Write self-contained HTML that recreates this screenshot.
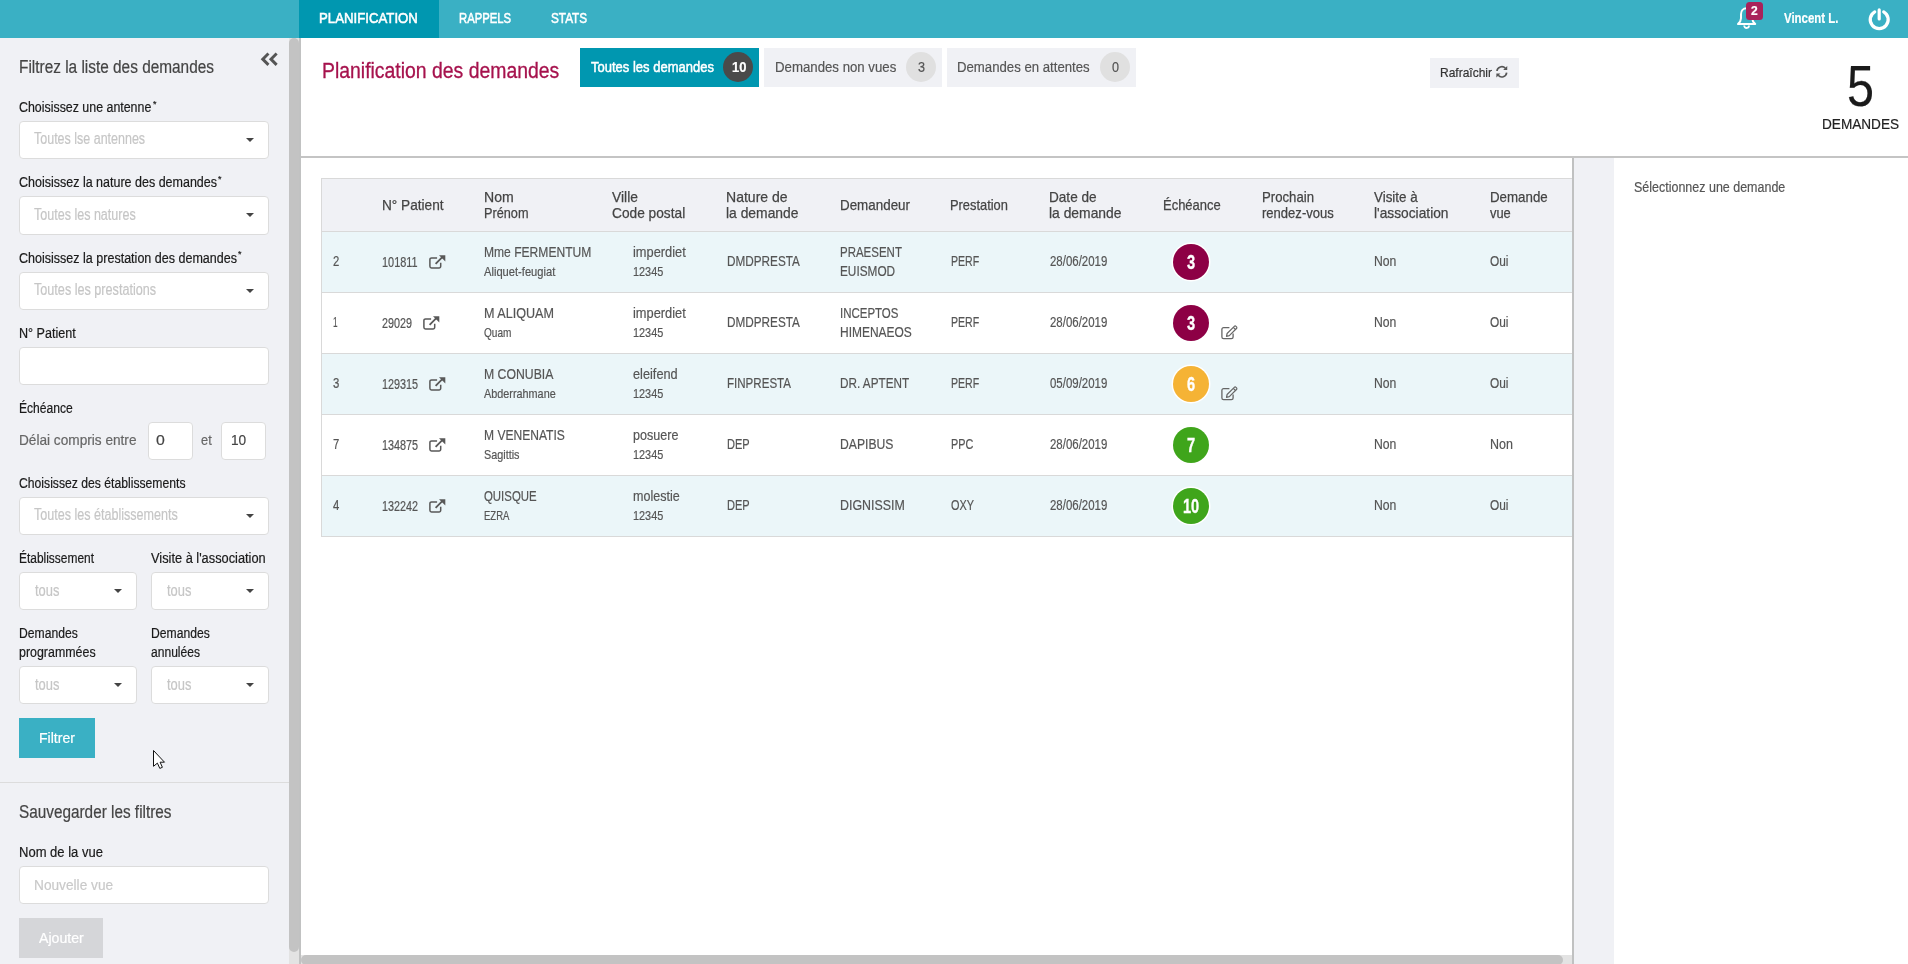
<!DOCTYPE html>
<html lang="fr"><head><meta charset="utf-8"><title>Planification des demandes</title>
<style>
html,body{margin:0;padding:0}
h1,h2,form,label,th,td{margin:0;font:inherit;text-align:left}
body{width:1908px;height:964px;overflow:hidden;position:relative;background:#fff;font-family:"Liberation Sans",sans-serif}
/* every visual element is placed in page coordinates relative to #root */
#root{position:absolute;left:0;top:0;width:1908px;height:964px;will-change:transform}
.abs,.t,.inp,.ic,.btn,.badge,.circ,.bg{position:absolute}
.t{display:inline-block;white-space:nowrap;line-height:1;transform-origin:0 50%;-webkit-text-stroke:.2px}
header .bg{left:0;top:0;width:1908px;height:38px;background:#3ab0c4}
header .active{left:299px;top:0;width:140px;height:38px;background:#0097b0}
aside .bg{left:0;top:38px;width:289px;height:926px;background:#f0f1f5}
main .bg{left:301px;top:38px;width:1607px;height:926px;background:#fff;z-index:-1}
.inp{box-sizing:border-box;background:#fff;border:1px solid #dcdcdc;border-radius:4px}
.caret{position:absolute;top:15.600px;width:0;height:0;border-left:4px solid transparent;border-right:4px solid transparent;border-top:4.500px solid #444}
.btn{box-sizing:border-box}
.nv{-webkit-text-stroke:.55px #fff}
thead .t{-webkit-text-stroke:.25px}
.tb{-webkit-text-stroke:.5px #fff}
.ttl{-webkit-text-stroke:.3px #a6124d}
.badge{border-radius:50%;width:30px;height:30px;top:52px}
.circ{border-radius:50%;width:36.200px;height:36.200px;box-shadow:0 0 0 1.500px #fff}
.num{font-size:20px;font-weight:700;color:#fff;-webkit-text-stroke:.35px #fff;transform:scaleX(.73)}
table.grid{margin:178px 0 0 321px;width:1252px;border-collapse:collapse;table-layout:fixed;border:1px solid #d9d9d9}
table.grid td,table.grid th{border-top:1px solid #d9d9d9;border-bottom:1px solid #d9d9d9;padding:0}
table.grid th{height:52px;background:#f0f1f5}
table.grid td{height:60px}
table.grid tr.odd td{background:#ebf6f9}
</style></head><body><div id="root">

<header><div class="bg"></div><div class="bg active"></div><nav>
<span class="t nv" style="left:319.3px;top:10.0px;font-size:15.5px;color:#fff;transform:scaleX(0.8527)">PLANIFICATION</span>
<span class="t nv" style="left:458.5px;top:10.0px;font-size:15.5px;color:#fff;transform:scaleX(0.7271)">RAPPELS</span>
<span class="t nv" style="left:550.7px;top:10.0px;font-size:15.5px;color:#fff;transform:scaleX(0.7575)">STATS</span>
</nav><div class="user">
<svg class="ic" style="left:1734px;top:4px" width="26" height="28" viewBox="1734 4 26 28"><path d="M1746.600 8.200c-3.400 0-5.600 2.600-5.600 6v4c0 2.400-1.300 4.200-3 5.800h17.200c-1.700-1.600-3-3.400-3-5.800v-4c0-3.400-2.200-6-5.600-6z" fill="none" stroke="#fff" stroke-width="2" stroke-linejoin="round"/><path d="M1744.200 25.600a2.400 2.400 0 0 0 4.800 0" fill="none" stroke="#fff" stroke-width="1.800"/></svg>
<div class="abs" style="left:1746px;top:2px;width:17px;height:18px;border-radius:3.500px;background:#a9225a"></div>
<span class="t" style="left:1751px;top:5px;font-size:12px;font-weight:700;color:#fff">2</span>
<span class="t" style="left:1784.3px;top:10.0px;font-size:15.5px;color:#fff;transform:scaleX(0.7385);font-weight:700">Vincent L.</span>
<svg class="ic" style="left:1867px;top:7px" width="24" height="24" viewBox="0 0 24 24"><path d="M7.700 4.810a9 9 0 1 0 9 0" fill="none" stroke="#fff" stroke-width="3.200" stroke-linecap="round"/><path d="M12.200 2.900v9" stroke="#fff" stroke-width="3.200" stroke-linecap="round"/></svg>
</div></header>
<aside><div class="bg"></div>
<div class="abs" style="left:289px;top:38px;width:10px;height:926px;background:#e3e3e3"></div>
<div class="abs" style="left:289px;top:38px;width:10px;height:914px;background:#c3c3c3;border-radius:5px"></div>
<div class="abs" style="left:299px;top:38px;width:2px;height:926px;background:#c1c2c2"></div>
<svg class="ic" style="left:258px;top:50px" width="22" height="18" viewBox="258 50 22 18"><path d="M268.450 53.450 262.750 59.150l5.700 5.700M276.650 53.450l-5.700 5.700 5.700 5.700" fill="none" stroke="#555" stroke-width="2.900"/></svg>
<form id="filters"><h2><span class="t" style="left:19.3px;top:59.0px;font-size:17.5px;color:#444;transform:scaleX(0.8792)">Filtrez la liste des demandes</span></h2>
<div class="fg"><label><span class="t" style="left:19.0px;top:100.0px;font-size:14px;color:#1a1a1a;transform:scaleX(0.8853)">Choisissez une antenne</span><span class="t" style="left:152.6px;top:100.0px;font-size:9px;color:#1a1a1a;transform:scaleX(0.9956)">*</span></label><div class="inp select" style="left:19px;top:121px;width:250px;height:38px"><i class="caret" style="left:226.2px"></i></div><span class="t" style="left:34.3px;top:131.0px;font-size:16px;color:#c6c6c6;transform:scaleX(0.7806)">Toutes lse antennes</span></div>
<div class="fg"><label><span class="t" style="left:19.0px;top:175.0px;font-size:14px;color:#1a1a1a;transform:scaleX(0.8927)">Choisissez la nature des demandes</span><span class="t" style="left:218.3px;top:175.0px;font-size:9px;color:#1a1a1a;transform:scaleX(0.9956)">*</span></label><div class="inp select" style="left:19px;top:196px;width:250px;height:38.6px"><i class="caret" style="left:226.2px"></i></div><span class="t" style="left:34.3px;top:207.0px;font-size:16px;color:#c6c6c6;transform:scaleX(0.7832)">Toutes les natures</span></div>
<div class="fg"><label><span class="t" style="left:19.0px;top:251.0px;font-size:14px;color:#1a1a1a;transform:scaleX(0.8950)">Choisissez la prestation des demandes</span><span class="t" style="left:238.3px;top:250.0px;font-size:9px;color:#1a1a1a;transform:scaleX(0.9956)">*</span></label><div class="inp select" style="left:19px;top:272px;width:250px;height:38px"><i class="caret" style="left:226.2px"></i></div><span class="t" style="left:34.3px;top:282.0px;font-size:16px;color:#c6c6c6;transform:scaleX(0.7890)">Toutes les prestations</span></div>
<div class="fg"><label><span class="t" style="left:19.0px;top:326.0px;font-size:14px;color:#1a1a1a;transform:scaleX(0.8989)">N° Patient</span></label><div class="inp" style="left:19px;top:347px;width:250px;height:37.6px"></div></div>
<div class="fg"><label><span class="t" style="left:19.0px;top:401.0px;font-size:14px;color:#1a1a1a;transform:scaleX(0.8638)">Échéance</span></label><span class="t" style="left:19.3px;top:432.0px;font-size:15px;color:#666;transform:scaleX(0.9093)">Délai compris entre</span><div class="inp" style="left:148px;top:422px;width:45px;height:37.5px"></div><span class="t" style="left:156.0px;top:432.0px;font-size:15px;color:#444;transform:scaleX(1.0547)">0</span><span class="t" style="left:200.5px;top:432.0px;font-size:15px;color:#666;transform:scaleX(0.8549)">et</span><div class="inp" style="left:221px;top:422px;width:45px;height:37.5px"></div><span class="t" style="left:230.8px;top:432.0px;font-size:15px;color:#444;transform:scaleX(0.9109)">10</span></div>
<div class="fg"><label><span class="t" style="left:19.0px;top:476.0px;font-size:14px;color:#1a1a1a;transform:scaleX(0.8698)">Choisissez des établissements</span></label><div class="inp select" style="left:19px;top:497px;width:250px;height:37.6px"><i class="caret" style="left:226.2px"></i></div><span class="t" style="left:34.3px;top:507.0px;font-size:16px;color:#c6c6c6;transform:scaleX(0.7849)">Toutes les établissements</span></div>
<div class="fg"><label><span class="t" style="left:19.3px;top:551.0px;font-size:14px;color:#1a1a1a;transform:scaleX(0.8529)">Établissement</span></label><div class="inp select" style="left:19px;top:572px;width:118px;height:37.6px"><i class="caret" style="left:94.2px"></i></div><span class="t" style="left:34.9px;top:583.0px;font-size:16px;color:#c6c6c6;transform:scaleX(0.8066)">tous</span></div>
<div class="fg"><label><span class="t" style="left:151.0px;top:551.0px;font-size:14px;color:#1a1a1a;transform:scaleX(0.9149)">Visite à l&#x27;association</span></label><div class="inp select" style="left:151px;top:572px;width:118px;height:37.6px"><i class="caret" style="left:94.2px"></i></div><span class="t" style="left:167.0px;top:583.0px;font-size:16px;color:#c6c6c6;transform:scaleX(0.8066)">tous</span></div>
<div class="fg"><label><span class="t" style="left:19.3px;top:626.0px;font-size:14px;color:#1a1a1a;transform:scaleX(0.8685)">Demandes</span><span class="t" style="left:19.3px;top:645.0px;font-size:14px;color:#1a1a1a;transform:scaleX(0.8868)">programmées</span></label><div class="inp select" style="left:19px;top:666px;width:118px;height:37.6px"><i class="caret" style="left:94.2px"></i></div><span class="t" style="left:34.9px;top:677.0px;font-size:16px;color:#c6c6c6;transform:scaleX(0.8066)">tous</span></div>
<div class="fg"><label><span class="t" style="left:151.0px;top:626.0px;font-size:14px;color:#1a1a1a;transform:scaleX(0.8685)">Demandes</span><span class="t" style="left:151.0px;top:645.0px;font-size:14px;color:#1a1a1a;transform:scaleX(0.8622)">annulées</span></label><div class="inp select" style="left:151px;top:666px;width:118px;height:37.6px"><i class="caret" style="left:94.2px"></i></div><span class="t" style="left:167.0px;top:677.0px;font-size:16px;color:#c6c6c6;transform:scaleX(0.8066)">tous</span></div>
<div class="btn" style="left:19px;top:718px;width:76px;height:40px;background:#3ab0c4"></div><span class="t" style="left:39.0px;top:731.0px;font-size:14px;color:#fff;transform:scaleX(1.0061)">Filtrer</span>
<div class="abs" style="left:0;top:782px;width:289px;height:1px;background:#dcdcdc"></div>
<h2><span class="t" style="left:19.3px;top:804.0px;font-size:17.5px;color:#444;transform:scaleX(0.8758)">Sauvegarder les filtres</span></h2>
<div class="fg"><label><span class="t" style="left:19.3px;top:845.0px;font-size:14px;color:#1a1a1a;transform:scaleX(0.9293)">Nom de la vue</span></label><div class="inp" style="left:19px;top:866.4px;width:250px;height:37.5px"></div><span class="t" style="left:34.3px;top:877.0px;font-size:15px;color:#c9c9c9;transform:scaleX(0.9121)">Nouvelle vue</span></div>
<div class="btn" style="left:19px;top:918px;width:84px;height:40px;background:#d5d6d9"></div><span class="t" style="left:38.8px;top:931.0px;font-size:14px;color:#fff;transform:scaleX(1.0099)">Ajouter</span>
</form>
<svg class="ic" style="left:150px;top:747px" width="18" height="24" viewBox="150 747 18 24"><path d="M153.500 750.500v15.800l3.900-3.200 2.400 5.300 2.600-1.100-2.300-5.100h4.400z" fill="#fff" stroke="#111" stroke-width="1" stroke-linejoin="round"/></svg>
</aside>
<main><div class="bg"></div>
<section id="top"><h1><span class="t ttl" style="left:321.8px;top:61.0px;font-size:21.3px;color:#a6124d;transform:scaleX(0.9110)">Planification des demandes</span></h1>
<div class="tabs">
<div class="btn" style="left:580px;top:48px;width:179px;height:39px;background:#0097b0"></div><span class="t tb" style="left:590.5px;top:59.0px;font-size:15.5px;color:#fff;transform:scaleX(0.8390)">Toutes les demandes</span><div class="badge" style="left:723px;background:#4a4a4a"></div><span class="t" style="left:731.600px;top:60px;font-size:14px;font-weight:700;color:#fff;transform:scaleX(.93)">10</span>
<div class="btn" style="left:764px;top:48px;width:178px;height:39px;background:#f0f1f5"></div><span class="t" style="left:774.8px;top:59.0px;font-size:15.5px;color:#555;transform:scaleX(0.8532)">Demandes non vues</span><div class="badge" style="left:906px;background:#e0e0e0"></div><span class="t" style="left:917.800px;top:60px;font-size:14px;color:#555;transform:scaleX(.9)">3</span>
<div class="btn" style="left:947px;top:48px;width:189px;height:39px;background:#f0f1f5"></div><span class="t" style="left:957.3px;top:59.0px;font-size:15.5px;color:#555;transform:scaleX(0.8508)">Demandes en attentes</span><div class="badge" style="left:1100px;background:#e0e0e0"></div><span class="t" style="left:1111.500px;top:60px;font-size:14px;color:#555;transform:scaleX(.9)">0</span>
</div>
<div class="btn" style="left:1430px;top:58px;width:89px;height:30px;background:#f0f1f5"></div><span class="t" style="left:1439.9px;top:66.0px;font-size:13px;color:#333;transform:scaleX(0.9227)">Rafraîchir</span>
<svg class="ic" style="left:1495.300px;top:65.400px" width="13.600" height="13.600" viewBox="0 0 14 14"><path d="M2 6.200a5 5 0 0 1 8.700-2.800M12 7.800a5 5 0 0 1-8.700 2.800" fill="none" stroke="#555" stroke-width="1.700"/><path d="M12.600 1v4.200H8.400zM1.400 13V8.800h4.200z" fill="#555"/></svg>
<div class="count"><span class="t" style="left:1846.8px;top:58.0px;font-size:57px;color:#1a1a1a;transform:scaleX(0.8517)">5</span><span class="t" style="left:1821.9px;top:116.0px;font-size:15.5px;color:#222;transform:scaleX(0.8775)">DEMANDES</span></div>
<div class="abs" style="left:301px;top:156px;width:1607px;height:2px;background:#c4c4c4"></div>
</section>
<table class="grid"><colgroup><col style="width:49px"><col style="width:102px"><col style="width:128px"><col style="width:115px"><col style="width:113px"><col style="width:110px"><col style="width:100px"><col style="width:112px"><col style="width:99px"><col style="width:113px"><col style="width:115px"><col style="width:96px"></colgroup>
<thead><tr><th></th><th><span class="t" style="left:381.7px;top:197.0px;font-size:15px;color:#444;transform:scaleX(0.9099)">N° Patient</span></th><th><span class="t" style="left:483.6px;top:189.0px;font-size:15px;color:#444;transform:scaleX(0.9377)">Nom</span><span class="t" style="left:483.6px;top:205.0px;font-size:15px;color:#444;transform:scaleX(0.8471)">Prénom</span></th><th><span class="t" style="left:612.4px;top:189.0px;font-size:15px;color:#444;transform:scaleX(0.9224)">Ville</span><span class="t" style="left:612.4px;top:205.0px;font-size:15px;color:#444;transform:scaleX(0.9143)">Code postal</span></th><th><span class="t" style="left:726.4px;top:189.0px;font-size:15px;color:#444;transform:scaleX(0.9351)">Nature de</span><span class="t" style="left:726.4px;top:205.0px;font-size:15px;color:#444;transform:scaleX(0.9247)">la demande</span></th><th><span class="t" style="left:839.6px;top:197.0px;font-size:15px;color:#444;transform:scaleX(0.8930)">Demandeur</span></th><th><span class="t" style="left:950.3px;top:197.0px;font-size:15px;color:#444;transform:scaleX(0.8572)">Prestation</span></th><th><span class="t" style="left:1049.4px;top:189.0px;font-size:15px;color:#444;transform:scaleX(0.9059)">Date de</span><span class="t" style="left:1049.4px;top:205.0px;font-size:15px;color:#444;transform:scaleX(0.9247)">la demande</span></th><th><span class="t" style="left:1162.5px;top:197.0px;font-size:15px;color:#444;transform:scaleX(0.8648)">Échéance</span></th><th><span class="t" style="left:1261.5px;top:189.0px;font-size:15px;color:#444;transform:scaleX(0.8783)">Prochain</span><span class="t" style="left:1261.5px;top:205.0px;font-size:15px;color:#444;transform:scaleX(0.8698)">rendez-vous</span></th><th><span class="t" style="left:1373.6px;top:189.0px;font-size:15px;color:#444;transform:scaleX(0.8912)">Visite à</span><span class="t" style="left:1373.6px;top:205.0px;font-size:15px;color:#444;transform:scaleX(0.9169)">l&#x27;association</span></th><th><span class="t" style="left:1489.7px;top:189.0px;font-size:15px;color:#444;transform:scaleX(0.8871)">Demande</span><span class="t" style="left:1489.7px;top:205.0px;font-size:15px;color:#444;transform:scaleX(0.8599)">vue</span></th></tr></thead><tbody>
<tr class="odd"><td><span class="t" style="left:332.9px;top:254.0px;font-size:14.2px;color:#555;transform:scaleX(0.7984)">2</span></td><td><span class="t" style="left:382.4px;top:255.0px;font-size:14.2px;color:#555;transform:scaleX(0.7690)">101811</span><svg class="ic" style="left:428.7px;top:254.8px" width="17" height="14" viewBox="0 0 17 14"><path d="M11.700 7.800v3.500a1.600 1.600 0 0 1-1.600 1.600H2.500A1.600 1.600 0 0 1 .900 11.300V4.500a1.600 1.600 0 0 1 1.600-1.600H8.100" fill="none" stroke="#585858" stroke-width="1.500"/><path d="M6.600 8.800 13.800 1.600" stroke="#585858" stroke-width="1.800" fill="none"/><path d="M10 .200h6.300v6.300z" fill="#585858"/></svg></td><td><span class="t" style="left:484.0px;top:244.0px;font-size:15px;color:#555;transform:scaleX(0.8048)">Mme FERMENTUM</span><span class="t" style="left:484.0px;top:266.0px;font-size:12.6px;color:#555;transform:scaleX(0.8855)">Aliquet-feugiat</span></td><td><span class="t" style="left:632.8px;top:244.0px;font-size:15px;color:#555;transform:scaleX(0.8557)">imperdiet</span><span class="t" style="left:633.2px;top:265.0px;font-size:13.5px;color:#555;transform:scaleX(0.8070)">12345</span></td><td><span class="t" style="left:727.0px;top:253.0px;font-size:15px;color:#555;transform:scaleX(0.7833)">DMDPRESTA</span></td><td><span class="t" style="left:839.9px;top:244.0px;font-size:15px;color:#555;transform:scaleX(0.7655)">PRAESENT</span><span class="t" style="left:839.9px;top:263.0px;font-size:15px;color:#555;transform:scaleX(0.7870)">EUISMOD</span></td><td><span class="t" style="left:951.0px;top:253.0px;font-size:15px;color:#555;transform:scaleX(0.7047)">PERF</span></td><td><span class="t" style="left:1049.7px;top:254.0px;font-size:14px;color:#555;transform:scaleX(0.8177)">28/06/2019</span></td><td><div class="circ" style="left:1172.9px;top:243.8px;background:#8d0045"></div><span class="t num" style="left:1187.05px;top:252px">3</span></td><td></td><td><span class="t" style="left:1374.0px;top:253.0px;font-size:15px;color:#555;transform:scaleX(0.8136)">Non</span></td><td><span class="t" style="left:1489.7px;top:253.0px;font-size:15px;color:#555;transform:scaleX(0.7925)">Oui</span></td></tr>
<tr class="even"><td><span class="t" style="left:332.9px;top:315.0px;font-size:14.2px;color:#555;transform:scaleX(0.5830)">1</span></td><td><span class="t" style="left:382.4px;top:316.0px;font-size:14.2px;color:#555;transform:scaleX(0.7604)">29029</span><svg class="ic" style="left:422.5px;top:315.8px" width="17" height="14" viewBox="0 0 17 14"><path d="M11.700 7.800v3.500a1.600 1.600 0 0 1-1.600 1.600H2.500A1.600 1.600 0 0 1 .900 11.300V4.500a1.600 1.600 0 0 1 1.600-1.600H8.100" fill="none" stroke="#585858" stroke-width="1.500"/><path d="M6.600 8.800 13.800 1.600" stroke="#585858" stroke-width="1.800" fill="none"/><path d="M10 .200h6.300v6.300z" fill="#585858"/></svg></td><td><span class="t" style="left:484.0px;top:305.0px;font-size:15px;color:#555;transform:scaleX(0.8397)">M ALIQUAM</span><span class="t" style="left:484.0px;top:327.0px;font-size:12.6px;color:#555;transform:scaleX(0.7989)">Quam</span></td><td><span class="t" style="left:632.8px;top:305.0px;font-size:15px;color:#555;transform:scaleX(0.8557)">imperdiet</span><span class="t" style="left:633.2px;top:326.0px;font-size:13.5px;color:#555;transform:scaleX(0.8070)">12345</span></td><td><span class="t" style="left:727.0px;top:314.0px;font-size:15px;color:#555;transform:scaleX(0.7833)">DMDPRESTA</span></td><td><span class="t" style="left:839.9px;top:305.0px;font-size:15px;color:#555;transform:scaleX(0.7643)">INCEPTOS</span><span class="t" style="left:839.9px;top:324.0px;font-size:15px;color:#555;transform:scaleX(0.7976)">HIMENAEOS</span></td><td><span class="t" style="left:951.0px;top:314.0px;font-size:15px;color:#555;transform:scaleX(0.7047)">PERF</span></td><td><span class="t" style="left:1049.7px;top:315.0px;font-size:14px;color:#555;transform:scaleX(0.8177)">28/06/2019</span></td><td><div class="circ" style="left:1172.9px;top:304.8px;background:#8d0045"></div><span class="t num" style="left:1187.05px;top:313px">3</span><svg class="ic" style="left:1221px;top:324.8px" width="17" height="15" viewBox="0 0 17 15"><path d="M12.100 8.600v3.400a1.700 1.700 0 0 1-1.700 1.700H2.600a1.700 1.700 0 0 1-1.700-1.700V4.300a1.700 1.700 0 0 1 1.700-1.700H8.400" fill="none" stroke="#666" stroke-width="1.300"/><path d="M5.500 11.300l.6-2.800 7.200-7.200a1.200 1.200 0 0 1 1.700 0l.5.500a1.200 1.200 0 0 1 0 1.700L8.300 10.700z" fill="none" stroke="#666" stroke-width="1.200" stroke-linejoin="round"/><path d="M12.300 2.300l2.200 2.200" stroke="#666" stroke-width="1.100"/></svg></td><td></td><td><span class="t" style="left:1374.0px;top:314.0px;font-size:15px;color:#555;transform:scaleX(0.8136)">Non</span></td><td><span class="t" style="left:1489.7px;top:314.0px;font-size:15px;color:#555;transform:scaleX(0.7925)">Oui</span></td></tr>
<tr class="odd"><td><span class="t" style="left:332.9px;top:376.0px;font-size:14.2px;color:#555;transform:scaleX(0.7984)">3</span></td><td><span class="t" style="left:382.4px;top:377.0px;font-size:14.2px;color:#555;transform:scaleX(0.7625)">129315</span><svg class="ic" style="left:428.7px;top:376.8px" width="17" height="14" viewBox="0 0 17 14"><path d="M11.700 7.800v3.500a1.600 1.600 0 0 1-1.600 1.600H2.500A1.600 1.600 0 0 1 .900 11.300V4.500a1.600 1.600 0 0 1 1.600-1.600H8.100" fill="none" stroke="#585858" stroke-width="1.500"/><path d="M6.600 8.800 13.800 1.600" stroke="#585858" stroke-width="1.800" fill="none"/><path d="M10 .200h6.300v6.300z" fill="#585858"/></svg></td><td><span class="t" style="left:484.0px;top:366.0px;font-size:15px;color:#555;transform:scaleX(0.8163)">M CONUBIA</span><span class="t" style="left:484.0px;top:388.0px;font-size:12.6px;color:#555;transform:scaleX(0.8606)">Abderrahmane</span></td><td><span class="t" style="left:632.8px;top:366.0px;font-size:15px;color:#555;transform:scaleX(0.8507)">eleifend</span><span class="t" style="left:633.2px;top:387.0px;font-size:13.5px;color:#555;transform:scaleX(0.8070)">12345</span></td><td><span class="t" style="left:727.0px;top:375.0px;font-size:15px;color:#555;transform:scaleX(0.7704)">FINPRESTA</span></td><td><span class="t" style="left:839.9px;top:375.0px;font-size:15px;color:#555;transform:scaleX(0.7820)">DR. APTENT</span></td><td><span class="t" style="left:951.0px;top:375.0px;font-size:15px;color:#555;transform:scaleX(0.7047)">PERF</span></td><td><span class="t" style="left:1049.7px;top:376.0px;font-size:14px;color:#555;transform:scaleX(0.8177)">05/09/2019</span></td><td><div class="circ" style="left:1172.9px;top:365.8px;background:#f5b335"></div><span class="t num" style="left:1187.05px;top:374px">6</span><svg class="ic" style="left:1221px;top:385.8px" width="17" height="15" viewBox="0 0 17 15"><path d="M12.100 8.600v3.400a1.700 1.700 0 0 1-1.700 1.700H2.600a1.700 1.700 0 0 1-1.700-1.700V4.300a1.700 1.700 0 0 1 1.700-1.700H8.400" fill="none" stroke="#666" stroke-width="1.300"/><path d="M5.500 11.300l.6-2.800 7.200-7.200a1.200 1.200 0 0 1 1.700 0l.5.500a1.200 1.200 0 0 1 0 1.700L8.300 10.700z" fill="none" stroke="#666" stroke-width="1.200" stroke-linejoin="round"/><path d="M12.300 2.300l2.200 2.200" stroke="#666" stroke-width="1.100"/></svg></td><td></td><td><span class="t" style="left:1374.0px;top:375.0px;font-size:15px;color:#555;transform:scaleX(0.8136)">Non</span></td><td><span class="t" style="left:1489.7px;top:375.0px;font-size:15px;color:#555;transform:scaleX(0.7925)">Oui</span></td></tr>
<tr class="even"><td><span class="t" style="left:332.9px;top:437.0px;font-size:14.2px;color:#555;transform:scaleX(0.7984)">7</span></td><td><span class="t" style="left:382.4px;top:438.0px;font-size:14.2px;color:#555;transform:scaleX(0.7625)">134875</span><svg class="ic" style="left:428.7px;top:437.8px" width="17" height="14" viewBox="0 0 17 14"><path d="M11.700 7.800v3.500a1.600 1.600 0 0 1-1.600 1.600H2.500A1.600 1.600 0 0 1 .900 11.300V4.500a1.600 1.600 0 0 1 1.600-1.600H8.100" fill="none" stroke="#585858" stroke-width="1.500"/><path d="M6.600 8.800 13.800 1.600" stroke="#585858" stroke-width="1.800" fill="none"/><path d="M10 .200h6.300v6.300z" fill="#585858"/></svg></td><td><span class="t" style="left:484.0px;top:427.0px;font-size:15px;color:#555;transform:scaleX(0.8034)">M VENENATIS</span><span class="t" style="left:484.0px;top:449.0px;font-size:12.6px;color:#555;transform:scaleX(0.8593)">Sagittis</span></td><td><span class="t" style="left:632.8px;top:427.0px;font-size:15px;color:#555;transform:scaleX(0.8373)">posuere</span><span class="t" style="left:633.2px;top:448.0px;font-size:13.5px;color:#555;transform:scaleX(0.8070)">12345</span></td><td><span class="t" style="left:727.0px;top:436.0px;font-size:15px;color:#555;transform:scaleX(0.7360)">DEP</span></td><td><span class="t" style="left:839.9px;top:436.0px;font-size:15px;color:#555;transform:scaleX(0.8108)">DAPIBUS</span></td><td><span class="t" style="left:951.0px;top:436.0px;font-size:15px;color:#555;transform:scaleX(0.7230)">PPC</span></td><td><span class="t" style="left:1049.7px;top:437.0px;font-size:14px;color:#555;transform:scaleX(0.8177)">28/06/2019</span></td><td><div class="circ" style="left:1172.9px;top:426.8px;background:#3fa51b"></div><span class="t num" style="left:1187.05px;top:435px">7</span></td><td></td><td><span class="t" style="left:1374.0px;top:436.0px;font-size:15px;color:#555;transform:scaleX(0.8136)">Non</span></td><td><span class="t" style="left:1489.7px;top:436.0px;font-size:15px;color:#555;transform:scaleX(0.8318)">Non</span></td></tr>
<tr class="odd"><td><span class="t" style="left:332.9px;top:498.0px;font-size:14.2px;color:#555;transform:scaleX(0.7984)">4</span></td><td><span class="t" style="left:382.4px;top:499.0px;font-size:14.2px;color:#555;transform:scaleX(0.7625)">132242</span><svg class="ic" style="left:428.7px;top:498.8px" width="17" height="14" viewBox="0 0 17 14"><path d="M11.700 7.800v3.500a1.600 1.600 0 0 1-1.600 1.600H2.500A1.600 1.600 0 0 1 .900 11.300V4.500a1.600 1.600 0 0 1 1.600-1.600H8.100" fill="none" stroke="#585858" stroke-width="1.500"/><path d="M6.600 8.800 13.800 1.600" stroke="#585858" stroke-width="1.800" fill="none"/><path d="M10 .200h6.300v6.300z" fill="#585858"/></svg></td><td><span class="t" style="left:484.0px;top:488.0px;font-size:15px;color:#555;transform:scaleX(0.7603)">QUISQUE</span><span class="t" style="left:484.0px;top:510.0px;font-size:12.6px;color:#555;transform:scaleX(0.7561)">EZRA</span></td><td><span class="t" style="left:632.8px;top:488.0px;font-size:15px;color:#555;transform:scaleX(0.8360)">molestie</span><span class="t" style="left:633.2px;top:509.0px;font-size:13.5px;color:#555;transform:scaleX(0.8070)">12345</span></td><td><span class="t" style="left:727.0px;top:497.0px;font-size:15px;color:#555;transform:scaleX(0.7360)">DEP</span></td><td><span class="t" style="left:839.9px;top:497.0px;font-size:15px;color:#555;transform:scaleX(0.8271)">DIGNISSIM</span></td><td><span class="t" style="left:951.0px;top:497.0px;font-size:15px;color:#555;transform:scaleX(0.7258)">OXY</span></td><td><span class="t" style="left:1049.7px;top:498.0px;font-size:14px;color:#555;transform:scaleX(0.8177)">28/06/2019</span></td><td><div class="circ" style="left:1172.9px;top:487.8px;background:#3fa51b"></div><span class="t num" style="left:1182.8px;top:496px">10</span></td><td></td><td><span class="t" style="left:1374.0px;top:497.0px;font-size:15px;color:#555;transform:scaleX(0.8136)">Non</span></td><td><span class="t" style="left:1489.7px;top:497.0px;font-size:15px;color:#555;transform:scaleX(0.7925)">Oui</span></td></tr>
</tbody></table>
<div class="abs" style="left:1572px;top:158px;width:2px;height:806px;background:#c0c1c1"></div>
<div class="abs" style="left:1574px;top:158px;width:40px;height:806px;background:#f0f1f5"></div>
<section id="detail"><span class="t" style="left:1633.7px;top:179.0px;font-size:15.5px;color:#555;transform:scaleX(0.8053)">Sélectionnez une demande</span></section>
<div class="abs" style="left:301px;top:955px;width:1271px;height:9px;background:#e3e3e3"></div>
<div class="abs" style="left:301px;top:955px;width:1262px;height:10px;background:#c3c3c3;border-radius:5px"></div>
</main>
</div></body></html>
